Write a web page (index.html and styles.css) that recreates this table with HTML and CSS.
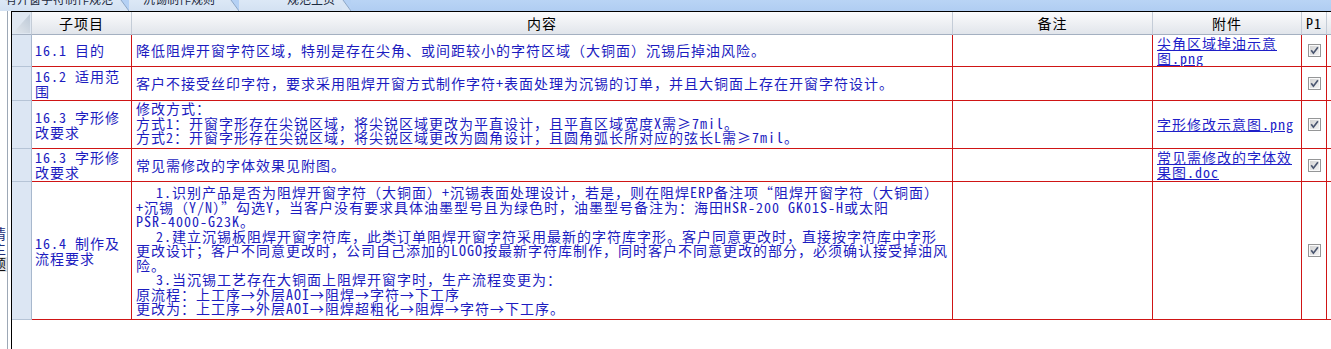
FILE: index.html
```html
<!DOCTYPE html>
<html lang="zh-CN">
<head>
<meta charset="utf-8">
<title>规范</title>
<link rel="stylesheet" href="styles.css">
</head>
<body>
<svg class="defs" width="0" height="0" aria-hidden="true">
  <defs>
    <linearGradient id="cbg" x1="0" y1="0" x2="1" y2="1">
      <stop offset="0" stop-color="#d4d4d4"/>
      <stop offset="1" stop-color="#f2f2f2"/>
    </linearGradient>
    <symbol id="cb" viewBox="0 0 13 13">
      <rect x="0.5" y="0.5" width="12" height="12" fill="#fafafa" stroke="#959697"/>
      <rect x="2" y="2" width="9" height="9" fill="url(#cbg)"/>
      <path d="M3.2 6.3 L5.4 9.2 L9.9 3.2" stroke="#4a5670" stroke-width="1.7" fill="none"/>
    </symbol>
    <linearGradient id="tri" x1="0" y1="1" x2="1" y2="0">
      <stop offset="0" stop-color="#e3e8ee"/>
      <stop offset="1" stop-color="#bcc8d6"/>
    </linearGradient>
  </defs>
</svg>

<div class="tabstrip">
  <div class="tab t1"><span class="tabtext">有开窗字符制作规范</span><svg class="slant" width="9" height="11" viewBox="0 0 9 11"><polygon points="0,0 1,0 9,11 0,11" fill="#d8e5f4"/><line x1="1" y1="0" x2="9" y2="11" stroke="#8ea7c6"/></svg></div>
  <div class="tab t2"><span class="tabtext">沉锡制作规则</span><svg class="slant" width="9" height="11" viewBox="0 0 9 11"><polygon points="0,0 1,0 9,11 0,11" fill="#d8e5f4"/><line x1="1" y1="0" x2="9" y2="11" stroke="#8ea7c6"/></svg></div>
  <div class="tab t3"><span class="tabtext">规范主页</span><svg class="slant" width="9" height="11" viewBox="0 0 9 11"><polygon points="0,0 1,0 9,11 0,11" fill="#d8e5f4"/><line x1="1" y1="0" x2="9" y2="11" stroke="#8ea7c6"/></svg></div>
</div>

<div class="main">
  <div class="side">
    <div class="sidebar"><span class="vlabel">情主<span class="hl">题</span></span></div>
  </div>
  <div class="gridwrap">
    <div class="grid">
      <div class="c h corner"><svg width="17" height="19" viewBox="0 0 17 19"><polygon points="0,19 17,19 17,0" fill="url(#tri)"/></svg></div>
      <div class="c h">子项目</div>
      <div class="c h">内容</div>
      <div class="c h">备注</div>
      <div class="c h">附件</div>
      <div class="c h">P1</div>
      <div class="c h last"></div>

      <div class="c rh"></div>
      <div class="c sub"><div>16.1 目的</div></div>
      <div class="c txt"><div>降低阻焊开窗字符区域，特别是存在尖角、或间距较小的字符区域（大铜面）沉锡后掉油风险。</div></div>
      <div class="c"></div>
      <div class="c att"><div><a href="#">尖角区域掉油示意<br>图.png</a></div></div>
      <div class="c chk"><svg width="13" height="13"><use href="#cb"/></svg></div>
      <div class="c last"></div>

      <div class="c rh"></div>
      <div class="c sub"><div>16.2 适用范<br>围</div></div>
      <div class="c txt"><div>客户不接受丝印字符，要求采用阻焊开窗方式制作字符+表面处理为沉锡的订单，并且大铜面上存在开窗字符设计。</div></div>
      <div class="c"></div>
      <div class="c att"></div>
      <div class="c chk"><svg width="13" height="13"><use href="#cb"/></svg></div>
      <div class="c last"></div>

      <div class="c rh"></div>
      <div class="c sub"><div>16.3 字形修<br>改要求</div></div>
      <div class="c txt tight"><div>修改方式：<br>方式1：开窗字形存在尖锐区域，将尖锐区域更改为平直设计，且平直区域宽度X需≥7mil。<br>方式2：开窗字形存在尖锐区域，将尖锐区域更改为圆角设计，且圆角弧长所对应的弦长L需≥7mil。</div></div>
      <div class="c"></div>
      <div class="c att"><div><a href="#">字形修改示意图.png</a></div></div>
      <div class="c chk"><svg width="13" height="13"><use href="#cb"/></svg></div>
      <div class="c last"></div>

      <div class="c rh"></div>
      <div class="c sub"><div>16.3 字形修<br>改要求</div></div>
      <div class="c txt"><div>常见需修改的字体效果见附图。</div></div>
      <div class="c"></div>
      <div class="c att"><div><a href="#">常见需修改的字体效<br>果图.doc</a></div></div>
      <div class="c chk"><svg width="13" height="13"><use href="#cb"/></svg></div>
      <div class="c last"></div>

      <div class="c rh"></div>
      <div class="c sub"><div>16.4 制作及<br>流程要求</div></div>
      <div class="c txt long"><div><span class="ind"></span>1.识别产品是否为阻焊开窗字符（大铜面）+沉锡表面处理设计，若是，则在阻焊ERP备注项“阻焊开窗字符（大铜面）<br>+沉锡（Y/N）”勾选Y，当客户没有要求具体油墨型号且为绿色时，油墨型号备注为：海田HSR-200 GK01S-H或太阳<br>PSR-4000-G23K。<br><span class="ind"></span>2.建立沉锡板阻焊开窗字符库，此类订单阻焊开窗字符采用最新的字符库字形。客户同意更改时，直接按字符库中字形<br>更改设计；客户不同意更改时，公司自己添加的LOGO按最新字符库制作，同时客户不同意更改的部分，必须确认接受掉油风<br>险。<br><span class="ind"></span>3.当沉锡工艺存在大铜面上阻焊开窗字时，生产流程变更为：<br>原流程：上工序→外层AOI→阻焊→字符→下工序<br>更改为：上工序→外层AOI→阻焊超粗化→阻焊→字符→下工序。</div></div>
      <div class="c"></div>
      <div class="c att"></div>
      <div class="c chk"><svg width="13" height="13"><use href="#cb"/></svg></div>
      <div class="c last"></div>
    </div>
  </div>
</div>
</body>
</html>
```

FILE: styles.css
```css
html, body {
  margin: 0;
  padding: 0;
}
body {
  width: 1331px;
  height: 349px;
  overflow: hidden;
  background: #ffffff;
  font-family: "Noto Sans Mono CJK SC", "Noto Sans CJK SC", sans-serif;
  font-size: 14px;
  letter-spacing: 1px;
}
.defs {
  display: block;
  width: 0;
  height: 0;
  overflow: hidden;
}

/* tab strip */
.tabstrip {
  height: 11px;
  display: flex;
  background: linear-gradient(#b9d4f5, #b0cdf2);
  overflow: hidden;
  letter-spacing: 0;
}
.tab {
  display: flex;
  height: 11px;
  background: linear-gradient(#dce8f6, #d3e1f2);
}
.t1 { width: 129px; }
.t2 { width: 110px; }
.t3 { width: 112px; }
.tabtext {
  flex: 1;
  display: block;
  font-family: "Noto Sans CJK SC", sans-serif;
  font-size: 12px;
  line-height: 15px;
  margin-top: -9px;
  color: #1d2b40;
  white-space: nowrap;
  overflow: hidden;
}
.t1 .tabtext { padding-left: 5px; }
.t2 .tabtext { padding-left: 14px; }
.t3 .tabtext { padding-left: 48px; }
.slant {
  display: block;
  flex: none;
  background: #b5d1f4;
}

/* main area */
.main {
  display: flex;
  height: 338px;
}
.side {
  width: 11px;
  flex: none;
  display: flex;
}
.sidebar {
  width: 8px;
  box-sizing: border-box;
  border-right: 1px solid #9da8b6;
  overflow: hidden;
}
.vlabel {
  display: block;
  writing-mode: vertical-rl;
  font-family: "Noto Sans CJK SC", sans-serif;
  font-size: 14px;
  letter-spacing: 1px;
  line-height: 15px;
  width: 15px;
  margin-left: -9px;
  margin-top: 216px;
  color: #23307a;
}
.hl {
  background: #e2e2e2;
  color: #111;
}
.gridwrap {
  flex: 1;
  border-left: 1px solid #000;
  border-top: 1px solid #000;
  overflow: hidden;
}
.grid {
  display: grid;
  grid-template-columns: 20px 100px 821px 200px 149px 25px 1fr;
  grid-template-rows: 23px 32px 34px 48px 33px 138px;
}
.c {
  box-sizing: border-box;
  border-right: 1px solid #cf1515;
  border-bottom: 1px solid #cf1515;
  display: flex;
  flex-direction: column;
  justify-content: center;
  overflow: hidden;
  white-space: nowrap;
  color: #1c1cc0;
  line-height: 15px;
}
.h {
  background: linear-gradient(#fbfbfc, #e1e5eb);
  border-right: 1px solid #c4ccd7;
  border-bottom: 1px solid #a4b0c1;
  align-items: center;
  color: #000;
}
.corner {
  background: #dfe7f1;
  justify-content: flex-end;
  align-items: flex-end;
  padding: 0 1px 1px 0;
}
.corner svg { display: block; }
.rh {
  background: #dce6f3;
  border-right: 1px solid #a8b8cd;
  border-bottom: 1px solid #b6c4d6;
}
.sub {
  padding-left: 3px;
}
.txt {
  padding-left: 4px;
}
.tight {
  line-height: 14.5px;
  justify-content: flex-start;
}
.long {
  line-height: 14.5px;
}
.ind {
  display: inline-block;
  width: 20px;
}
.att {
  padding-left: 4px;
}
.att a {
  color: #1f1fc8;
  text-decoration: underline;
}
.chk {
  align-items: center;
}
.chk svg { display: block; }
.last {
  border-right: 0;
}
```
